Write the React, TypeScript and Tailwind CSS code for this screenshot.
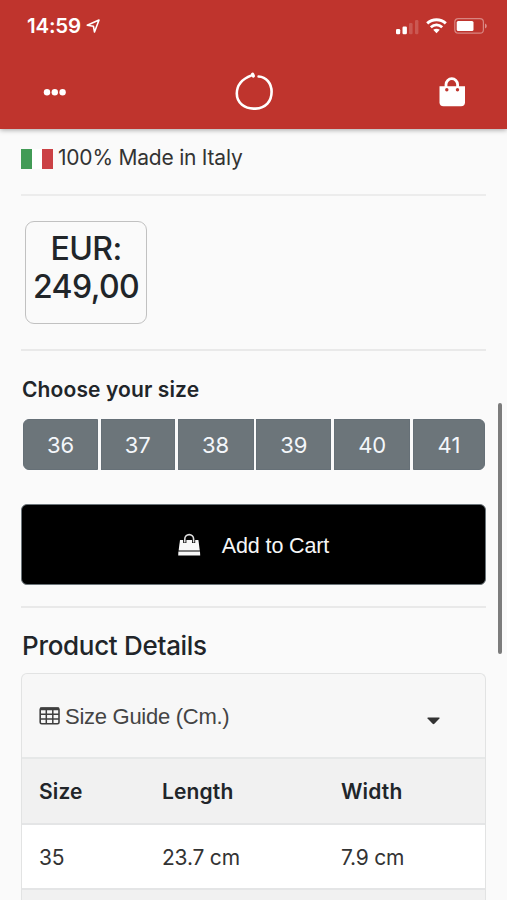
const SIZES = [
  { label: '36', cls: 'w-[75px] rounded-l-[6px]' },
  { label: '37', cls: 'w-[74px]' },
  { label: '38', cls: 'w-[76px]' },
  { label: '39', cls: 'w-[75px]' },
  { label: '40', cls: 'w-[76px]' },
  { label: '41', cls: 'w-[72px] rounded-r-[6px]' },
];

function StatusBar() {
  return (
    <div className="flex h-[52px] items-center justify-between pl-[27px] pr-[20px] text-white">
      <div className="flex items-center gap-[5px]">
        <span className="text-[20.5px] font-semibold leading-[24px] tracking-[-0.2px]">14:59</span>
        <svg width="15" height="16" viewBox="0 0 15 16" fill="none" stroke="currentColor" strokeWidth="1.6" strokeLinejoin="round">
          <path d="M1.2 7.2 13 2 8.5 14 7.4 8.2Z" />
        </svg>
      </div>
      <div className="flex items-center gap-[7px]">
        <svg width="24" height="16" viewBox="0 0 24 16" fill="currentColor" className="mt-px">
          <rect x="1" y="10" width="4.2" height="5.2" rx="1.2" />
          <rect x="7.5" y="7.5" width="4.4" height="7.7" rx="1.2" />
          <rect x="14" y="4" width="3.6" height="11.2" rx="1.2" opacity="0.18" />
          <rect x="20" y="1" width="3.4" height="14.2" rx="1.2" opacity="0.18" />
        </svg>
        <svg width="21" height="16" viewBox="0 0 21 16" fill="none" stroke="currentColor">
          <path d="M1.2 5.4C6.5.5 14.5.5 19.8 5.4" strokeWidth="3" />
          <path d="M4.8 9.2C8.2 6.2 12.8 6.2 16.2 9.2" strokeWidth="2.8" />
          <path d="M7.2 11.8Q10.5 9.6 13.8 11.8L10.5 15.2Z" fill="currentColor" stroke="none" />
        </svg>
        <svg width="33" height="16" viewBox="0 0 33 16">
          <rect x="0.8" y="0.6" width="28.6" height="14.6" rx="3.5" fill="none" stroke="white" strokeWidth="1.2" opacity="0.4" />
          <rect x="2.7" y="3" width="16.8" height="10" rx="1.5" fill="white" />
          <path d="M31 5.5v5q1.8-.8 1.8-2.5T31 5.5Z" fill="white" opacity="0.45" />
        </svg>
      </div>
    </div>
  );
}

function NavBar() {
  return (
    <div className="flex h-[77px] items-center justify-between pl-[43px] pr-[41px] text-white">
      <svg width="24" height="8" viewBox="0 0 24 8" className="mt-[3px]" fill="currentColor">
        <circle cx="4" cy="4.2" r="3.2" />
        <circle cx="11.8" cy="4.2" r="3.2" />
        <circle cx="19.6" cy="4.2" r="3.2" />
      </svg>
      <svg width="40" height="40" viewBox="0 0 40 40" className="mt-[3px] ml-[2px]" fill="none" stroke="currentColor" strokeLinecap="round">
        <path d="M24.6 4.5C32.2 4.8 37.6 11.3 37.6 19.8 37.6 29.5 31.8 36 21.5 36.6 10.5 37.4 2.8 30.8 2.8 21.6 2.8 12.3 8.8 6.7 17.6 3.4" strokeWidth="2.6" />
        <path d="M18.6 2.2 19.4 4" strokeWidth="3.2" />
      </svg>
      <svg width="28" height="32" viewBox="0 0 28 32" className="mt-[3px]">
        <path d="M8 12V8.5a5.8 5.8 0 0 1 11.6 0V12" fill="none" stroke="white" strokeWidth="2.8" />
        <path d="M1.5 10.2h25.5v16q0 4-4 4H5.5q-4 0-4-4Z" fill="white" />
        <circle cx="8.8" cy="13.8" r="1.7" fill="#bf342d" />
        <circle cx="19.5" cy="13.8" r="1.7" fill="#bf342d" />
      </svg>
    </div>
  );
}

function CartIcon() {
  return (
    <svg width="24" height="24" viewBox="0 0 24 24" className="mt-px">
      <path d="M3 7h18.4L22.8 17.6H1.6Z" fill="#f8f8f8" />
      <path d="M1.4 18.5h21.6l.2 4H1.2Z" fill="#f8f8f8" />
      <path d="M7.8 10V6.2a4.4 4.4 0 0 1 8.8 0V10" fill="none" stroke="#000" strokeWidth="3.2" />
      <path d="M7.8 9.6V6a4.4 4.4 0 0 1 8.8 0v3.6" fill="none" stroke="#ddd" strokeWidth="1.6" />
    </svg>
  );
}

function TableIcon() {
  return (
    <svg width="21" height="18" viewBox="0 0 21 18" fill="none" stroke="#3f3f3f">
      <rect x="1.2" y="1" width="18.8" height="15.8" rx="1.5" strokeWidth="1.6" />
      <path d="M1.2 1.8h18.8" strokeWidth="2.8" />
      <path d="M1 7.2h19M1 12h19M7.3 2v15M13.8 2v15" strokeWidth="1.5" />
    </svg>
  );
}

export default function App() {
  return (
    <div className="relative h-[900px] w-[507px] overflow-hidden bg-[#fafafa] font-['Inter',sans-serif] text-[#212529]">
      <header className="relative h-[129px] bg-[#bf342d] shadow-[0_1px_5px_rgba(0,0,0,0.35)]">
        <StatusBar />
        <NavBar />
      </header>

      <main className="px-[21px]">
        <div className="flex h-[65px] items-start pt-[14px]">
          <div className="mt-[6px] flex h-[20px] w-[32px] shrink-0">
            <div className="w-[11px] bg-[#429b56]" />
            <div className="w-[10px] bg-white" />
            <div className="w-[11px] bg-[#cb4145]" />
          </div>
          <span className="ml-[5px] whitespace-nowrap text-[21px] leading-[30px] tracking-[-0.22px] text-[#333]">100% Made in Italy</span>
        </div>
        <hr className="h-[2px] border-0 bg-[#ececec]" />

        <div className="ml-[4px] mt-[25px] flex h-[103px] w-[122px] flex-col items-center rounded-[9px] border-[1.5px] border-[#c1c1c1] pt-[8px] text-[32px] font-medium leading-[38px] tracking-[-0.6px]">
          <span>EUR:</span>
          <span className="whitespace-nowrap">249,00</span>
        </div>
        <hr className="mt-[25px] h-[2px] border-0 bg-[#e9e9e9]" />

        <h2 className="ml-px mt-[24px] whitespace-nowrap text-[21px] font-semibold leading-[30px] tracking-[0.12px]">Choose your size</h2>
        <div className="mt-[14px] flex h-[51px] justify-between pl-[2px] pr-px">
          {SIZES.map((s) => (
            <button key={s.label} className={`flex items-center justify-center border border-[#667077] bg-[#6c757a] pt-[2px] text-[22px] text-[#f4f7fa] ${s.cls}`}>
              {s.label}
            </button>
          ))}
        </div>

        <button className="mt-[34px] flex h-[81px] w-full items-center justify-center rounded-[6px] border-[1.5px] border-[#6c757a] bg-black pr-px font-['Liberation_Sans',sans-serif] text-[21.5px] tracking-[-0.12px] text-[#f6f6f6]">
          <CartIcon />
          <span className="ml-[21px] mt-[3px] whitespace-nowrap">Add to Cart</span>
        </button>
        <hr className="mt-[21px] h-[2px] border-0 bg-[#e9e9e9]" />

        <h2 className="ml-px mt-[20px] whitespace-nowrap text-[26px] font-medium leading-[35px] tracking-[-0.3px]">Product Details</h2>

        <section className="mt-[10px] overflow-hidden rounded-t-[6px] border-[1.5px] border-b-0 border-[#e2e3e3] bg-[#f7f7f7]">
          <div className="flex h-[85px] items-center justify-between border-b-2 border-[#e6e8e8] pl-[17px] pr-[45px] font-['Liberation_Sans',sans-serif] text-[#444]">
            <div className="flex items-center gap-[5px]">
              <TableIcon />
              <span className="mt-[2px] whitespace-nowrap text-[22px] leading-[28px] tracking-[-0.27px]">Size Guide (Cm.)</span>
            </div>
            <svg width="13" height="8" viewBox="0 0 13 8" className="mt-[10px]">
              <path d="M1 .5h11q1 .2.4 1L7.4 6.8q-.9.8-1.8 0L.6 1.5Q.2.7 1 .5Z" fill="#333" />
            </svg>
          </div>
          <div className="grid h-[64px] grid-cols-[123px_179px_1fr] items-center bg-[#f1f1f1] pl-[17px] pt-[2px] text-[21px] font-semibold tracking-[0.15px]">
            <span>Size</span>
            <span>Length</span>
            <span>Width</span>
          </div>
          <div className="grid h-[67px] grid-cols-[123px_179px_1fr] items-center border-y-2 border-[#e4e5e6] bg-white pl-[17px] pt-[2px] text-[21px] tracking-[-0.2px] text-[#333]">
            <span>35</span>
            <span>23.7 cm</span>
            <span>7.9 cm</span>
          </div>
          <div className="h-[20px] bg-[#f1f1f1]" />
        </section>
      </main>

      <div className="absolute left-[498px] top-[403px] h-[251px] w-[4px] rounded-full bg-[#7c7c7c]" />
    </div>
  );
}
